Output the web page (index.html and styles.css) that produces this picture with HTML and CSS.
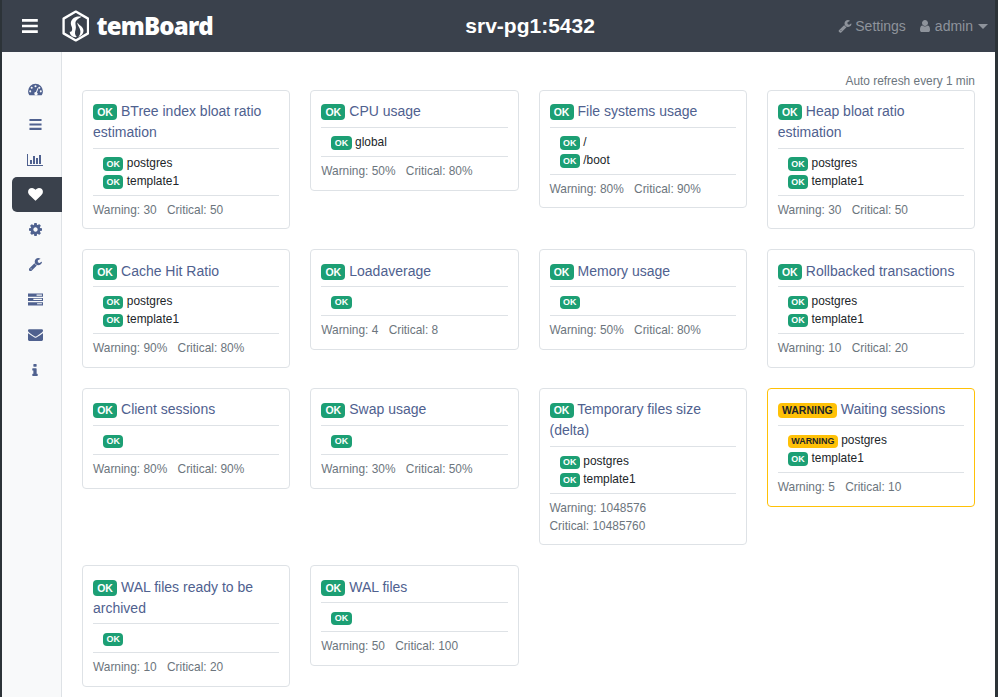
FILE: index.html
```html
<!DOCTYPE html>
<html lang="en">
<head>
    <meta charset="UTF-8">
    <title>temBoard</title>
    <link rel="stylesheet" href="styles.css">
</head>
<body>
    <!-- Top bar -->
    <header class="topbar">
        <div class="brand">
            <svg class="burger" viewBox="0 0 16 14"><path d="M0 0h16v2.600H0zM0 5.700h16v2.600H0zM0 11.400h16V14H0z"/></svg>
            <svg class="logo" viewBox="0 0 28 32">
                <path class="logo-hex" d="M14 1.400 26.400 8.500V23.500L14 30.600 1.600 23.500V8.500Z"/>
                <path class="logo-bird" d="M20 6.500C15 5.500 10.500 7.500 9.200 11.500 8.200 14.800 10.500 16.800 10.300 19.200 10.100 21.300 9 22.300 7.800 21.800 7.800 25.200 11 27.800 15 27.200 12.700 25 12.900 22 13.800 19.500 14.600 17.200 13.500 15 13.600 12.800 13.700 10.500 15.800 8.500 20 6.500ZM15.600 12.500C15.300 15.500 18.300 17.500 18.600 21 18.800 23.500 18 25.500 16.500 26.900 20.300 26 22 23 21.700 20 21.200 16.500 17.500 15.500 15.600 12.500Z"/>
            </svg>
            <span class="brand-name">temBoard</span>
        </div>
        <div class="instance">srv-pg1:5432</div>
        <nav class="topnav">
            <span class="topnav-item">
                <svg class="topnav-icon" viewBox="0 0 1792 1792"><path d="M448 1472q0-26-19-45t-45-19-45 19-19 45 19 45 45 19 45-19 19-45zm644-420l-682 682q-37 37-90 37-52 0-91-37l-106-108q-38-36-38-90 0-53 38-91l681-681q39 98 114.500 173.500t173.500 114.500zm634-435q0 39-23 106-47 134-164.500 217.500t-258.500 83.500q-185 0-316.500-131.500t-131.500-316.500 131.500-316.500 316.500-131.500q58 0 121.500 16.500t107.500 46.500q16 11 16 28t-16 28l-293 169v224l193 107q5-3 79-48.500t135.500-81 70.500-35.500q15 0 23.500 10t8.500 25z"/></svg>
                Settings
            </span>
            <span class="topnav-item">
                <svg class="topnav-icon" viewBox="0 0 1792 1792"><path d="M1536 1399q0 109-62.500 187t-150.500 78h-854q-88 0-150.500-78t-62.500-187q0-85 8.500-160.500t31.500-152 58.500-131 94-89 134.500-34.500q131 128 313 128t313-128q76 0 134.500 34.500t94 89 58.500 131 31.500 152 8.500 160.500zm-256-887q0 159-112.500 271.500t-271.500 112.500-271.500-112.500-112.500-271.500 112.500-271.500 271.500-112.500 271.500 112.500 112.500 271.500z"/></svg>
                admin
                <span class="caret"></span>
            </span>
        </nav>
    </header>

    <div class="layout">
        <!-- Side menu -->
        <aside class="sidebar">
            <a class="side-item"><svg class="side-icon side-icon-wide" viewBox="0 0 16 14"><path fill-rule="evenodd" d="M8 .8A8 8 0 0 0 0 8.800c0 1.600.4 2.900 1.200 4 .2.300.5.400.8.400h12c.3 0 .6-.1.8-.4.8-1.100 1.200-2.400 1.200-4a8 8 0 0 0-8-8ZM8 2.300a1.100 1.100 0 1 1 0 2.200 1.100 1.100 0 0 1 0-2.200ZM3.900 4a1.100 1.100 0 1 1 0 2.200 1.100 1.100 0 0 1 0-2.200ZM12.100 4a1.100 1.100 0 1 1 0 2.200 1.100 1.100 0 0 1 0-2.200ZM2.300 7.900a1.100 1.100 0 1 1 0 2.200 1.100 1.100 0 0 1 0-2.200ZM13.700 7.900a1.100 1.100 0 1 1 0 2.200 1.100 1.100 0 0 1 0-2.200ZM10.200 5.500l.9.400-1.600 4.200a1.700 1.700 0 1 1-1-.3Z"/></svg></a>
            <a class="side-item"><svg class="side-icon" viewBox="0 0 14 12"><path d="M.5 0h13v2.300H.5zM.5 4.800h13v2.300H.5zM.5 9.600h13V12H.5z"/></svg></a>
            <a class="side-item"><svg class="side-icon side-icon-chart" viewBox="0 0 2048 1792"><path d="M640 896v512h-256v-512h256zm384-512v1024h-256v-1024h256zm1024 1152v128h-2048v-1536h128v1408h1920zm-640-896v768h-256v-768h256zm384-384v1152h-256v-1152h256z"/></svg></a>
            <a class="side-item active"><svg class="side-icon side-icon-wide" viewBox="0 128 1792 1568"><path d="M896 1664q-26 0-44-18l-624-602q-10-8-27.500-26t-55.500-65.500-68-97.500-53.500-121-23.500-138q0-220 127-344t351-124q62 0 126.500 21.500t120 58 95.500 68.500 76 68q36-36 76-68t95.500-68.500 120-58 126.500-21.500q224 0 351 124t127 344q0 221-229 450l-623 600q-18 18-44 18z"/></svg></a>
            <a class="side-item"><svg class="side-icon" viewBox="128 128 1536 1536"><path d="M1152 896q0-106-75-181t-181-75-181 75-75 181 75 181 181 75 181-75 75-181zm512-109v222q0 12-8 23t-20 13l-185 28q-19 54-39 91 35 50 107 138 10 12 10 25t-9 23q-27 37-99 108t-94 71q-12 0-26-9l-138-108q-44 23-91 38-16 136-29 186-7 28-36 28h-222q-14 0-24.500-8.500t-11.500-21.500l-28-184q-49-16-90-37l-141 107q-10 9-25 9-14 0-25-11-126-114-165-168-7-10-7-23 0-12 8-23 15-21 51-66.500t54-70.500q-27-50-41-99l-183-27q-13-2-21-12.500t-8-23.500v-222q0-12 8-23t19-13l186-28q14-46 39-92-40-57-107-138-10-12-10-24 0-10 9-23 26-36 98.500-107.500t94.500-71.500q13 0 26 10l138 107q44-23 91-38 16-136 29-186 7-28 36-28h222q14 0 24.500 8.500t11.500 21.500l28 184q49 16 90 37l142-107q9-9 24-9 13 0 25 10 129 119 165 170 7 8 7 22 0 12-8 23-15 21-51 66.500t-54 70.500q26 50 41 98l183 28q13 2 21 12.500t8 23.500z"/></svg></a>
            <a class="side-item"><svg class="side-icon" viewBox="128 128 1600 1600"><path d="M448 1472q0-26-19-45t-45-19-45 19-19 45 19 45 45 19 45-19 19-45zm644-420l-682 682q-37 37-90 37-52 0-91-37l-106-108q-38-36-38-90 0-53 38-91l681-681q39 98 114.500 173.500t173.500 114.500zm634-435q0 39-23 106-47 134-164.500 217.500t-258.500 83.500q-185 0-316.500-131.500t-131.500-316.500 131.500-316.500 316.500-131.500q58 0 121.500 16.500t107.500 46.500q16 11 16 28t-16 28l-293 169v224l193 107q5-3 79-48.500t135.500-81 70.500-35.500q15 0 23.500 10t8.500 25z"/></svg></a>
            <a class="side-item"><svg class="side-icon side-icon-wide" viewBox="0 0 14 11"><path d="M0 0h14v3H0zM0 4h14v3H0zM0 8h14v3H0z"/><path class="side-gap" d="M8 .9h5v1H8zM5 4.900h8v1H5zM8.500 8.900h4.500v1H8.500z"/></svg></a>
            <a class="side-item"><svg class="side-icon side-icon-wide" viewBox="0 256 1792 1280"><path d="M1792 710v794q0 66-47 113t-113 47h-1472q-66 0-113-47t-47-113v-794q44 49 101 87 362 246 497 345 57 42 92.500 65.500t94.500 48 110 24.500h2q51 0 110-24.500t94.500-48 92.500-65.500q170-123 498-345 57-39 100-87zm0-294q0 79-49 151t-122 123q-376 261-468 325-10 7-42.500 30.500t-54 38-52 32.500-57.500 27-50 9h-2q-23 0-50-9t-57.500-27-52-32.500-54-38-42.500-30.500q-91-64-262-182.500t-205-142.500q-62-42-117-115.500t-55-136.500q0-78 41.500-130t118.500-52h1472q65 0 112.500 47t47.500 113z"/></svg></a>
            <a class="side-item"><svg class="side-icon side-icon-info" viewBox="0 0 640 1408"><path d="M640 1216v128q0 26-19 45t-45 19h-512q-26 0-45-19t-19-45v-128q0-26 19-45t45-19h64v-384h-64q-26 0-45-19t-19-45v-128q0-26 19-45t45-19h384q26 0 45 19t19 45v576h64q26 0 45 19t19 45zm-128-1152v192q0 26-19 45t-45 19h-256q-26 0-45-19t-19-45v-192q0-26 19-45t45-19h256q26 0 45 19t19 45z"/></svg></a>
        </aside>

        <main class="content">
            <div class="refresh">Auto refresh every 1 min</div>
            <div class="checks">
                <div class="card">
                    <h2 class="card-title"><span class="badge ok">OK</span> BTree index bloat ratio estimation</h2>
                    <ul class="hosts">
                        <li><span class="badge badge-sm ok">OK</span> postgres</li>
                        <li><span class="badge badge-sm ok">OK</span> template1</li>
                    </ul>
                    <div class="limits"><span>Warning: 30</span> <span>Critical: 50</span></div>
                </div>
                <div class="card">
                    <h2 class="card-title"><span class="badge ok">OK</span> CPU usage</h2>
                    <ul class="hosts">
                        <li><span class="badge badge-sm ok">OK</span> global</li>
                    </ul>
                    <div class="limits"><span>Warning: 50%</span> <span>Critical: 80%</span></div>
                </div>
                <div class="card">
                    <h2 class="card-title"><span class="badge ok">OK</span> File systems usage</h2>
                    <ul class="hosts">
                        <li><span class="badge badge-sm ok">OK</span> /</li>
                        <li><span class="badge badge-sm ok">OK</span> /boot</li>
                    </ul>
                    <div class="limits"><span>Warning: 80%</span> <span>Critical: 90%</span></div>
                </div>
                <div class="card">
                    <h2 class="card-title"><span class="badge ok">OK</span> Heap bloat ratio estimation</h2>
                    <ul class="hosts">
                        <li><span class="badge badge-sm ok">OK</span> postgres</li>
                        <li><span class="badge badge-sm ok">OK</span> template1</li>
                    </ul>
                    <div class="limits"><span>Warning: 30</span> <span>Critical: 50</span></div>
                </div>

                <div class="card">
                    <h2 class="card-title"><span class="badge ok">OK</span> Cache Hit Ratio</h2>
                    <ul class="hosts">
                        <li><span class="badge badge-sm ok">OK</span> postgres</li>
                        <li><span class="badge badge-sm ok">OK</span> template1</li>
                    </ul>
                    <div class="limits"><span>Warning: 90%</span> <span>Critical: 80%</span></div>
                </div>
                <div class="card">
                    <h2 class="card-title"><span class="badge ok">OK</span> Loadaverage</h2>
                    <ul class="hosts">
                        <li><span class="badge badge-sm ok">OK</span></li>
                    </ul>
                    <div class="limits"><span>Warning: 4</span> <span>Critical: 8</span></div>
                </div>
                <div class="card">
                    <h2 class="card-title"><span class="badge ok">OK</span> Memory usage</h2>
                    <ul class="hosts">
                        <li><span class="badge badge-sm ok">OK</span></li>
                    </ul>
                    <div class="limits"><span>Warning: 50%</span> <span>Critical: 80%</span></div>
                </div>
                <div class="card">
                    <h2 class="card-title"><span class="badge ok">OK</span> Rollbacked transactions</h2>
                    <ul class="hosts">
                        <li><span class="badge badge-sm ok">OK</span> postgres</li>
                        <li><span class="badge badge-sm ok">OK</span> template1</li>
                    </ul>
                    <div class="limits"><span>Warning: 10</span> <span>Critical: 20</span></div>
                </div>

                <div class="card">
                    <h2 class="card-title"><span class="badge ok">OK</span> Client sessions</h2>
                    <ul class="hosts">
                        <li><span class="badge badge-sm ok">OK</span></li>
                    </ul>
                    <div class="limits"><span>Warning: 80%</span> <span>Critical: 90%</span></div>
                </div>
                <div class="card">
                    <h2 class="card-title"><span class="badge ok">OK</span> Swap usage</h2>
                    <ul class="hosts">
                        <li><span class="badge badge-sm ok">OK</span></li>
                    </ul>
                    <div class="limits"><span>Warning: 30%</span> <span>Critical: 50%</span></div>
                </div>
                <div class="card">
                    <h2 class="card-title"><span class="badge ok">OK</span> Temporary files size (delta)</h2>
                    <ul class="hosts">
                        <li><span class="badge badge-sm ok">OK</span> postgres</li>
                        <li><span class="badge badge-sm ok">OK</span> template1</li>
                    </ul>
                    <div class="limits"><span>Warning: 1048576</span> <span>Critical: 10485760</span></div>
                </div>
                <div class="card card-warning">
                    <h2 class="card-title"><span class="badge warning">WARNING</span> Waiting sessions</h2>
                    <ul class="hosts">
                        <li><span class="badge badge-sm warning">WARNING</span> postgres</li>
                        <li><span class="badge badge-sm ok">OK</span> template1</li>
                    </ul>
                    <div class="limits"><span>Warning: 5</span> <span>Critical: 10</span></div>
                </div>

                <div class="card">
                    <h2 class="card-title"><span class="badge ok">OK</span> WAL files ready to be archived</h2>
                    <ul class="hosts">
                        <li><span class="badge badge-sm ok">OK</span></li>
                    </ul>
                    <div class="limits"><span>Warning: 10</span> <span>Critical: 20</span></div>
                </div>
                <div class="card">
                    <h2 class="card-title"><span class="badge ok">OK</span> WAL files</h2>
                    <ul class="hosts">
                        <li><span class="badge badge-sm ok">OK</span></li>
                    </ul>
                    <div class="limits"><span>Warning: 50</span> <span>Critical: 100</span></div>
                </div>
            </div>
        </main>
    </div>
</body>
</html>
```

FILE: styles.css
```css
/* Page frame */
html {
    overflow: hidden;
}

body {
    margin: 0;
    padding: 0 3px 0 2px;
    height: 100vh;
    box-sizing: border-box;
    display: flex;
    flex-direction: column;
    background-color: #2c3338;
    font-family: "Liberation Sans", Arial, sans-serif;
    font-size: 11.9px;
    line-height: 1.5;
    color: #212529;
}

/* Top bar */
.topbar {
    flex: none;
    height: 52px;
    display: flex;
    align-items: center;
    background-color: #3a414c;
    color: #fff;
}

.brand {
    width: 211px;
    flex: none;
    display: flex;
    align-items: center;
}

.burger {
    width: 16px;
    height: 14px;
    margin-left: 20px;
    fill: #fff;
}

.logo {
    width: 28px;
    height: 32px;
    margin-left: 24px;
}

.logo-hex {
    fill: none;
    stroke: #fff;
    stroke-width: 2.4;
    stroke-linejoin: round;
}

.logo-bird {
    fill: #fff;
}

.brand-name {
    margin-left: 7px;
    font-family: "Open Sans", sans-serif;
    font-size: 24px;
    font-weight: 800;
    letter-spacing: -0.8px;
}

.instance {
    flex: 1;
    text-align: center;
    font-size: 21px;
    font-weight: 700;
    padding-left: 9px;
}

.topnav {
    display: flex;
    align-items: center;
    gap: 12px;
    padding-right: 7px;
    font-size: 14px;
    color: #8e939b;
}

.topnav-item {
    display: flex;
    align-items: center;
    gap: 3px;
}

.topnav-icon {
    width: 14px;
    height: 14px;
    fill: #8e939b;
}

.caret {
    width: 0;
    height: 0;
    margin-left: 2px;
    border-top: 5px solid #8e939b;
    border-left: 5px solid transparent;
    border-right: 5px solid transparent;
}

.layout {
    flex: 1;
    display: flex;
    min-height: 0;
    background-color: #fff;
}

/* Side menu */
.sidebar {
    flex: none;
    box-sizing: border-box;
    width: 60px;
    padding: 20px 0 0 10px;
    background-color: #f8f9fa;
    border-right: 1px solid #dee2e6;
}

.side-item {
    display: flex;
    align-items: center;
    justify-content: center;
    height: 35px;
    padding-right: 3px;
    box-sizing: border-box;
}

.side-item.active {
    width: 50px;
    background-color: #3a414c;
    border-radius: 5px 0 0 5px;
}

.side-icon {
    width: 13px;
    height: 13px;
    fill: #4f618f;
}

.side-icon-wide {
    width: 15px;
    height: 13px;
}

.side-icon-chart {
    width: 16px;
    height: 14px;
}

.side-icon-info {
    width: 6px;
    height: 12px;
}

.side-gap {
    fill: #f8f9fa;
}

.active .side-icon {
    fill: #fff;
}

/* Checks */
.content {
    flex: 1;
    min-width: 0;
    padding: 20px 20px 10px 20px;
}

.refresh {
    padding-top: 0.6px;
    margin-bottom: -0.6px;
    text-align: right;
    color: #6c757d;
}

.checks {
    display: grid;
    grid-template-columns: repeat(4, 1fr);
    gap: 20px;
    align-items: start;
}

.card {
    padding: 10px;
    border: 1px solid #dee2e6;
    border-radius: 4px;
    background-color: #fff;
}

.card-warning {
    border-color: #ffc107;
}

.card-title {
    margin: 0;
    padding: 0.2px 0 4.8px;
    border-bottom: 1px solid #dee2e6;
    font-size: 14px;
    font-weight: 400;
    color: #4f618f;
}

.badge {
    display: inline-block;
    padding: 0.25em 0.4em;
    border-radius: 4px;
    font-size: 75%;
    font-weight: 700;
    line-height: 1;
    vertical-align: baseline;
}

.ok {
    background-color: #1c9f74;
    color: #fff;
}

.warning {
    background-color: #ffc107;
    color: #212529;
}

.hosts {
    margin: 0;
    padding: 5.8px 0 4.2px 10px;
    list-style: none;
    border-bottom: 1px solid #dee2e6;
}

.limits {
    padding-top: 6px;
    margin-bottom: -1px;
    color: #6c757d;
}

.limits span {
    margin-right: 7px;
    display: inline-block;
}
```
